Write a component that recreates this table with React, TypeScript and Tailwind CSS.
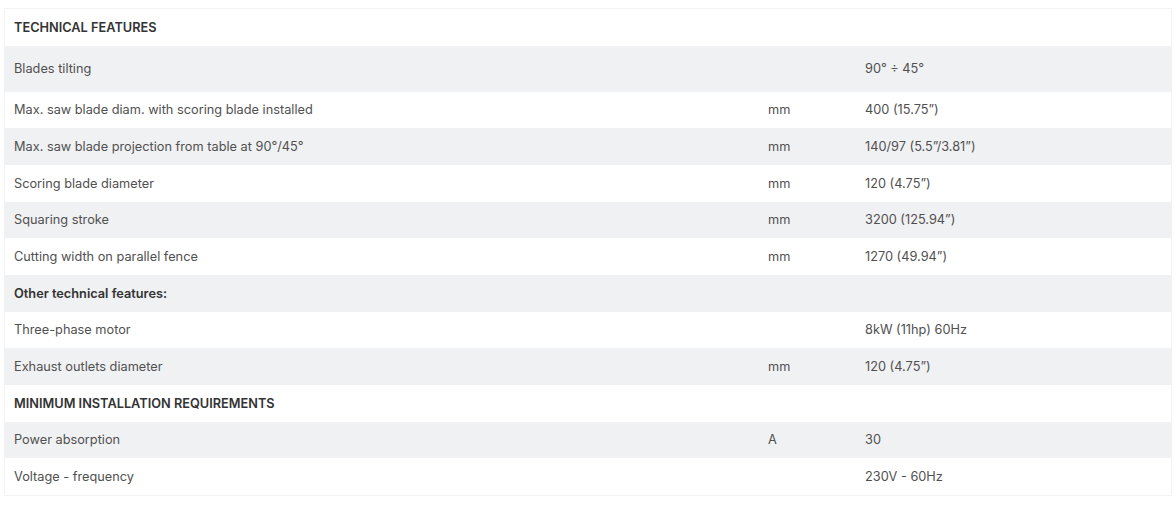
import React from "react";

type Row = { label: string; unit?: string; value?: string; head?: boolean; tall?: boolean };

const rows: Row[] = [
  { label: "TECHNICAL FEATURES", head: true },
  { label: "Blades tilting", value: "90° ÷ 45°", tall: true },
  { label: "Max. saw blade diam. with scoring blade installed", unit: "mm", value: "400 (15.75”)" },
  { label: "Max. saw blade projection from table at 90°/45°", unit: "mm", value: "140/97 (5.5”/3.81”)" },
  { label: "Scoring blade diameter", unit: "mm", value: "120 (4.75”)" },
  { label: "Squaring stroke", unit: "mm", value: "3200 (125.94”)" },
  { label: "Cutting width on parallel fence", unit: "mm", value: "1270 (49.94”)" },
  { label: "Other technical features:", head: true },
  { label: "Three-phase motor", value: "8kW (11hp) 60Hz" },
  { label: "Exhaust outlets diameter", unit: "mm", value: "120 (4.75”)" },
  { label: "MINIMUM INSTALLATION REQUIREMENTS", head: true },
  { label: "Power absorption", unit: "A", value: "30" },
  { label: "Voltage - frequency", value: "230V - 60Hz" },
];

export default function App() {
  return (
    <div className="w-[1176px] h-[507px] bg-white pt-[8px] pl-[4px]" style={{ fontFamily: "Inter, 'Noto Sans', sans-serif" }}>
      <div className="w-[1168px] border border-[#f3f3f4]">
        {rows.map((r, i) => (
          <div
            key={i}
            className={`grid grid-cols-[754px_97px_1fr] items-center text-[12.75px] ${r.tall ? "h-[46px]" : "h-[36.67px]"} ${i % 2 === 1 ? "bg-[#f0f1f3]" : "bg-white"}`}
          >
            <div className={`pl-[9px] ${r.head ? "font-semibold text-[#333333]" : "text-[#505050]"}`}>{r.label}</div>
            <div className="pl-[9px] text-[#505050]">{r.unit ?? ""}</div>
            <div className="pl-[9px] text-[#505050]">{r.value ?? ""}</div>
          </div>
        ))}
      </div>
    </div>
  );
}
